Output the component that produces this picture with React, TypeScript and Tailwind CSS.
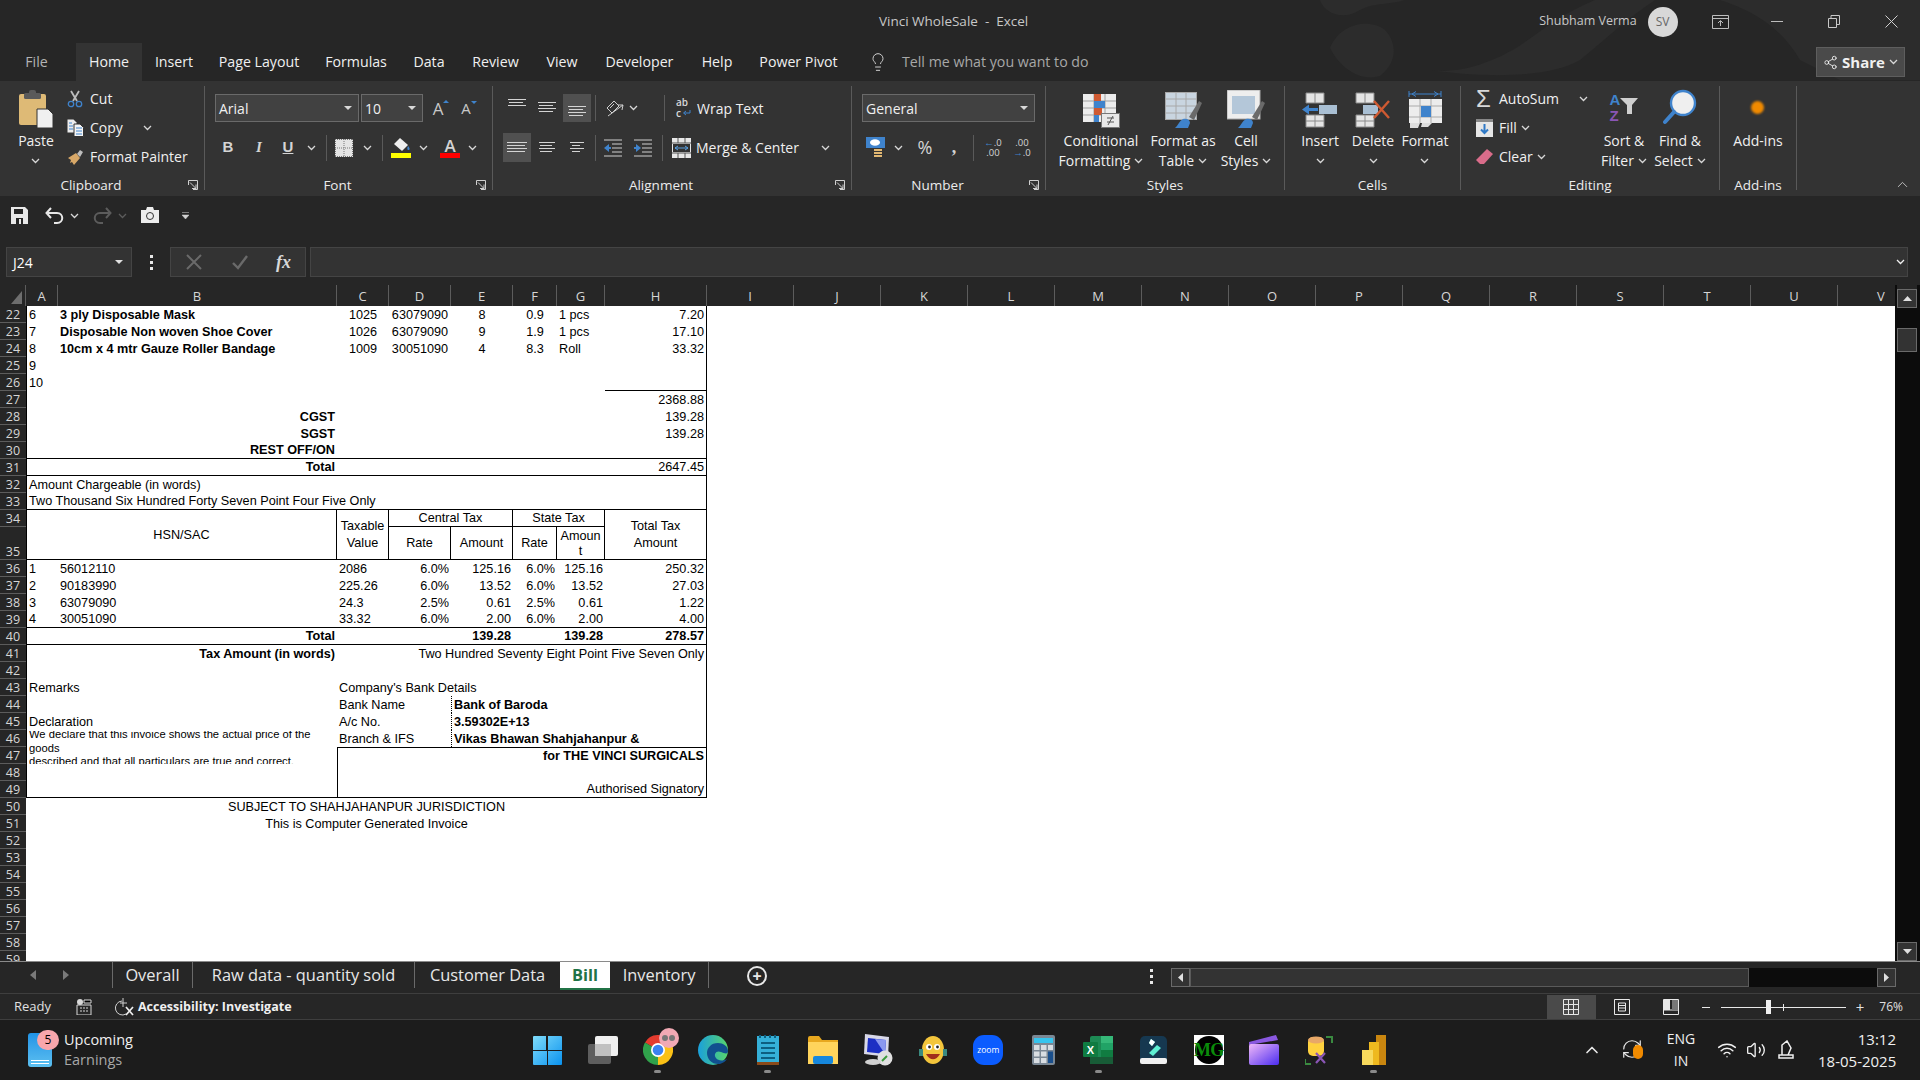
import type { ReactNode } from "react";
import clsx from "clsx";
import { ChevronUp, Volume2, Wifi, Lightbulb, Share2, RefreshCw } from "lucide-react";

const L = "border-l border-black";
const R = "border-r border-black";
const B = "border-b border-black";
const DOT = "border-l border-l-black [border-left-style:dotted]";

function Chev({ className, color = "#d8d8d8" }: { className?: string; color?: string }) {
  return (
    <svg width="9" height="6" viewBox="0 0 9 6" className={clsx("shrink-0", className)}>
      <path d="M1 1l3.5 3.5L8 1" fill="none" stroke={color} strokeWidth="1.3" />
    </svg>
  );
}

function Launcher() {
  return (
    <svg width="10" height="10" viewBox="0 0 10 10" className="shrink-0">
      <path d="M.5 5V.5H9.5V9.5H5M2 2.5l6 6M8 4.5v4H4" fill="none" stroke="#d0d0d0" />
    </svg>
  );
}

function Lines({ rows, active }: { rows: [number, number][]; active?: boolean }) {
  return (
    <div className={clsx("w-[28px] h-full flex items-center justify-center", active && "bg-[#505050]")}>
      <svg width="20" height="24" viewBox="0 0 20 24">
        {rows.map(([x, y], i) => (
          <rect key={i} x={x} y={y} width={i % 2 === 0 ? 20 - x * 2 : 20 - x * 2 - 2} height="1" fill="#d4d4d4" />
        ))}
      </svg>
    </div>
  );
}

function Group({ label, launcher, className, children }: { label: string; launcher?: boolean; className: string; children: ReactNode }) {
  return (
    <div className={clsx("h-[104px] flex flex-col border-r border-[#5a5a5a] shrink-0", className)}>
      <div className="h-[90px]">{children}</div>
      <div className="h-[14px] flex text-[13.5px] leading-[18px] text-[#ececec]">
        <span className="flex-1 text-center">{label}</span>
        {launcher && (
          <span className="w-[22px] flex justify-center pt-[4px]">
            <Launcher />
          </span>
        )}
      </div>
    </div>
  );
}

function BigBtn({ w, icon, lines }: { w: string; icon: ReactNode; lines: ReactNode[] }) {
  return (
    <div className={clsx("flex flex-col items-center shrink-0", w)}>
      <div className="h-[42px] flex items-end justify-center">{icon}</div>
      <div className="mt-[3px] text-[14px] leading-[20px] text-center whitespace-nowrap text-[#f0f0f0]">
        {lines.map((l, i) => (
          <div key={i} className="h-[20px] flex items-center justify-center gap-[4px]">
            {l}
          </div>
        ))}
      </div>
    </div>
  );
}

function SmallRow({ icon, children, className }: { icon: ReactNode; children: ReactNode; className?: string }) {
  return (
    <div className={clsx("h-[29px] flex items-center text-[14px] text-[#f0f0f0] whitespace-nowrap", className)}>
      {icon}
      {children}
    </div>
  );
}

function Combo({ value, w }: { value: string; w: string }) {
  return (
    <div className={clsx("h-[28px] flex items-center justify-between px-[3px] bg-[#414141] border border-[#6a6a6a] text-[14px] text-[#f0f0f0] shrink-0", w)}>
      <span>{value}</span>
      <svg width="8" height="4" viewBox="0 0 8 4" className="mr-[3px]">
        <path d="M0 0h8L4 4z" fill="#d8d8d8" />
      </svg>
    </div>
  );
}

function Sep({ className }: { className: string }) {
  return <div className={clsx("w-[1px] h-[26px] bg-[#5a5a5a] shrink-0", className)} />;
}

function Cb({ className, children, colSpan, rowSpan }: { className?: string; children?: ReactNode; colSpan?: number; rowSpan?: number }) {
  return (
    <td colSpan={colSpan} rowSpan={rowSpan} className={clsx("p-0 pt-[1px] px-[2px] bg-white text-black whitespace-nowrap align-middle", className)}>
      {children}
    </td>
  );
}

function Row({ n, h = "h-[17px]", children }: { n: number; h?: string; children?: ReactNode }) {
  return (
    <tr className={h}>
      <td className={clsx("p-0 bg-[#262626] border-b border-[#5c5c5c] text-center text-[#d6d6d6] font-['Open_Sans',sans-serif] text-[12.5px] leading-[15px] align-bottom", h)}>{n}</td>
      {children}
    </tr>
  );
}

const colHeads: [string, string][] = [
  ["A", "w-[32px]"], ["B", "w-[279px]"], ["C", "w-[52px]"], ["D", "w-[62px]"], ["E", "w-[62px]"], ["F", "w-[44px]"], ["G", "w-[48px]"], ["H", "w-[102px]"],
  ["I", "w-[87px]"], ["J", "w-[87px]"], ["K", "w-[87px]"], ["L", "w-[87px]"], ["M", "w-[87px]"], ["N", "w-[87px]"], ["O", "w-[87px]"], ["P", "w-[87px]"], ["Q", "w-[87px]"], ["R", "w-[87px]"], ["S", "w-[87px]"], ["T", "w-[87px]"], ["U", "w-[87px]"], ["V", "w-[87px]"],
];

const items = [
  [22, "6", "3 ply Disposable Mask", "1025", "63079090", "8", "0.9", "1 pcs", "7.20"],
  [23, "7", "Disposable Non woven Shoe Cover", "1026", "63079090", "9", "1.9", "1 pcs", "17.10"],
  [24, "8", "10cm x 4 mtr Gauze Roller Bandage", "1009", "30051090", "4", "8.3", "Roll", "33.32"],
];

const taxes = [
  [36, "1", "56012110", "2086", "6.0%", "125.16", "6.0%", "125.16", "250.32"],
  [37, "2", "90183990", "225.26", "6.0%", "13.52", "6.0%", "13.52", "27.03"],
  [38, "3", "63079090", "24.3", "2.5%", "0.61", "2.5%", "0.61", "1.22"],
  [39, "4", "30051090", "33.32", "6.0%", "2.00", "6.0%", "2.00", "4.00"],
];

function Sheet() {
  return (
    <div className="h-[676px] flex bg-[#262626]">
      <div className="w-[1895px] overflow-hidden shrink-0">
        <table className="table-fixed border-separate border-spacing-0 w-[1925px] bg-white font-['Liberation_Sans',Arial,sans-serif] text-[12.67px] leading-[15px]">
          <colgroup>
            <col className="w-[26px]" />
            {colHeads.map(([c, w]) => (
              <col key={c} className={w} />
            ))}
          </colgroup>
          <tbody>
            <tr className="h-[21px]">
              <td className="p-0 bg-[#262626] border-r border-[#5c5c5c]">
                <svg width="26" height="21" viewBox="0 0 26 21">
                  <path d="M22 6v13H11z" fill="#6e6e6e" />
                </svg>
              </td>
              {colHeads.map(([c]) => (
                <td key={c} className="p-0 bg-[#262626] border-r border-[#5c5c5c] text-center text-[#d6d6d6] font-['Open_Sans',sans-serif] text-[13px] leading-[20px]">
                  {c}
                </td>
              ))}
            </tr>
            {items.map((r) => (
              <Row key={r[0]} n={r[0] as number}>
                <Cb className={L}>{r[1]}</Cb>
                <Cb className="font-bold">{r[2]}</Cb>
                <Cb className="text-center">{r[3]}</Cb>
                <Cb className="text-center">{r[4]}</Cb>
                <Cb className="text-center">{r[5]}</Cb>
                <Cb className="text-center">{r[6]}</Cb>
                <Cb>{r[7]}</Cb>
                <Cb className={clsx(R, "text-right")}>{r[8]}</Cb>
              </Row>
            ))}
            <Row n={25}>
              <Cb className={L}>9</Cb>
              <Cb colSpan={6} />
              <Cb className={R} />
            </Row>
            <Row n={26}>
              <Cb className={L}>10</Cb>
              <Cb colSpan={6} />
              <Cb className={clsx(R, B)} />
            </Row>
            <Row n={27}>
              <Cb className={L} colSpan={7} />
              <Cb className={clsx(R, "text-right")}>2368.88</Cb>
            </Row>
            <Row n={28}>
              <Cb className={L} />
              <Cb className="font-bold text-right">CGST</Cb>
              <Cb colSpan={5} />
              <Cb className={clsx(R, "text-right")}>139.28</Cb>
            </Row>
            <Row n={29}>
              <Cb className={L} />
              <Cb className="font-bold text-right">SGST</Cb>
              <Cb colSpan={5} />
              <Cb className={clsx(R, "text-right")}>139.28</Cb>
            </Row>
            <Row n={30}>
              <Cb className={clsx(L, B)} />
              <Cb className={clsx(B, "font-bold text-right")}>REST OFF/ON</Cb>
              <Cb className={B} colSpan={5} />
              <Cb className={clsx(R, B)} />
            </Row>
            <Row n={31}>
              <Cb className={clsx(L, B)} />
              <Cb className={clsx(B, "font-bold text-right")}>Total</Cb>
              <Cb className={B} colSpan={5} />
              <Cb className={clsx(R, B, "text-right")}>2647.45</Cb>
            </Row>
            <Row n={32}>
              <Cb className={L} colSpan={7}>Amount Chargeable (in words)</Cb>
              <Cb className={R} />
            </Row>
            <Row n={33}>
              <Cb className={clsx(L, B)} colSpan={7}>Two Thousand Six Hundred Forty Seven Point Four Five Only</Cb>
              <Cb className={clsx(R, B)} />
            </Row>
            <Row n={34}>
              <Cb className={clsx(L, B, R, "text-center")} colSpan={2} rowSpan={2}>HSN/SAC</Cb>
              <Cb className={clsx(B, R, "text-center leading-[17px]")} rowSpan={2}>Taxable<br />Value</Cb>
              <Cb className={clsx(B, R, "text-center")} colSpan={2}>Central Tax</Cb>
              <Cb className={clsx(B, R, "text-center")} colSpan={2}>State Tax</Cb>
              <Cb className={clsx(B, R, "text-center leading-[17px]")} rowSpan={2}>Total Tax<br />Amount</Cb>
            </Row>
            <Row n={35} h="h-[33px]">
              <Cb className={clsx(B, R, "text-center")}>Rate</Cb>
              <Cb className={clsx(B, R, "text-center")}>Amount</Cb>
              <Cb className={clsx(B, R, "text-center")}>Rate</Cb>
              <Cb className={clsx(B, R, "text-center leading-[15px]")}>Amoun<br />t</Cb>
            </Row>
            {taxes.map((r) => {
              const last = r[0] === 39 && B;
              return (
                <Row key={r[0]} n={r[0] as number}>
                  <Cb className={clsx(L, last)}>{r[1]}</Cb>
                  <Cb className={clsx(last)}>{r[2]}</Cb>
                  <Cb className={clsx(last)}>{r[3]}</Cb>
                  <Cb className={clsx(last, "text-right")}>{r[4]}</Cb>
                  <Cb className={clsx(last, "text-right")}>{r[5]}</Cb>
                  <Cb className={clsx(last, "text-right")}>{r[6]}</Cb>
                  <Cb className={clsx(last, "text-right")}>{r[7]}</Cb>
                  <Cb className={clsx(R, last, "text-right")}>{r[8]}</Cb>
                </Row>
              );
            })}
            <Row n={40}>
              <Cb className={clsx(L, B)} />
              <Cb className={clsx(B, "font-bold text-right")}>Total</Cb>
              <Cb className={B} colSpan={2} />
              <Cb className={clsx(B, "font-bold text-right")}>139.28</Cb>
              <Cb className={B} />
              <Cb className={clsx(B, "font-bold text-right")}>139.28</Cb>
              <Cb className={clsx(R, B, "font-bold text-right")}>278.57</Cb>
            </Row>
            <Row n={41}>
              <Cb className={L} />
              <Cb className="font-bold text-right">Tax Amount (in words)</Cb>
              <Cb className={clsx(R, "text-right")} colSpan={6}>Two Hundred Seventy Eight Point Five Seven Only</Cb>
            </Row>
            <Row n={42}>
              <Cb className={clsx(L, R)} colSpan={8} />
            </Row>
            <Row n={43}>
              <Cb className={L} colSpan={2}>Remarks</Cb>
              <Cb className={R} colSpan={6}>Company's Bank Details</Cb>
            </Row>
            <Row n={44}>
              <Cb className={L} colSpan={2} />
              <Cb colSpan={2}>Bank Name</Cb>
              <Cb className={clsx(R, DOT, "font-bold")} colSpan={4}>Bank of Baroda</Cb>
            </Row>
            <Row n={45}>
              <Cb className={L} colSpan={2}>Declaration</Cb>
              <Cb colSpan={2}>A/c No.</Cb>
              <Cb className={clsx(R, DOT, "font-bold")} colSpan={4}>3.59302E+13</Cb>
            </Row>
            <Row n={46}>
              <Cb className={clsx(L, "align-top pt-0")} colSpan={2} rowSpan={2}>
                <div className="h-[33px] overflow-hidden text-[11.2px] leading-[13.5px]">
                  <div className="-mt-[3px]">
                    We declare that this invoice shows the actual price of the
                    <br />
                    goods
                    <br />
                    described and that all particulars are true and correct.
                  </div>
                </div>
              </Cb>
              <Cb colSpan={2}>Branch &amp; IFS</Cb>
              <Cb className={clsx(R, DOT, "font-bold")} colSpan={4}>Vikas Bhawan Shahjahanpur &amp;</Cb>
            </Row>
            <Row n={47}>
              <Cb className={clsx(L, R, "border-t border-t-black font-bold text-right")} colSpan={6}>for THE VINCI SURGICALS</Cb>
            </Row>
            <Row n={48}>
              <Cb className={L} colSpan={2} />
              <Cb className={clsx(L, R)} colSpan={6} />
            </Row>
            <Row n={49}>
              <Cb className={clsx(L, B)} colSpan={2} />
              <Cb className={clsx(L, R, B, "text-right")} colSpan={6}>Authorised Signatory</Cb>
            </Row>
            <Row n={50}>
              <Cb className="text-center" colSpan={8}>SUBJECT TO SHAHJAHANPUR JURISDICTION</Cb>
            </Row>
            <Row n={51}>
              <Cb className="text-center" colSpan={8}>This is Computer Generated Invoice</Cb>
            </Row>
            {[52, 53, 54, 55, 56, 57, 58, 59].map((n) => (
              <Row key={n} n={n} />
            ))}
          </tbody>
        </table>
      </div>
      <div className="flex-1 flex flex-col items-center bg-[#0c0c0c] pl-[2px] pr-[3px]">
        <div className="w-full h-[21px] bg-[#262626] -mx-[2px]" />
        <div className="w-full h-[19px] -mt-[17px] bg-[#333] border border-[#6a6a6a] flex items-center justify-center">
          <svg width="9" height="5" viewBox="0 0 9 5"><path d="M4.5 0L9 5H0z" fill="#e0e0e0" /></svg>
        </div>
        <div className="w-full h-[24px] mt-[20px] bg-[#333] border border-[#6a6a6a]" />
        <div className="flex-1" />
        <div className="w-full h-[19px] bg-[#333] border border-[#6a6a6a] flex items-center justify-center">
          <svg width="9" height="5" viewBox="0 0 9 5"><path d="M0 0h9L4.5 5z" fill="#e0e0e0" /></svg>
        </div>
      </div>
    </div>
  );
}

function TaskIcon({ children, dot }: { children: ReactNode; dot?: boolean }) {
  return (
    <div className="w-[55.1px] h-[60px] shrink-0 flex flex-col items-center pt-[14px]">
      <div className="h-[32px] flex items-center justify-center">{children}</div>
      <div className={clsx("mt-[4px] w-[7px] h-[3px] rounded-full", dot ? "bg-[#8a8a8a]" : "bg-transparent")} />
    </div>
  );
}

export default function App() {
  return (
    <div className="w-[1920px] h-[1080px] overflow-hidden bg-[#262626] font-['Open_Sans',sans-serif] text-white flex flex-col">
      {/* title bar */}
      <div className="relative h-[43px] shrink-0 flex items-center text-[13.5px] text-[#c8c8c8]">
        <svg className="absolute left-[1300px] top-0" width="620" height="80" viewBox="0 0 620 80">
          <path d="M20 0c5 15 25 20 40 10 15-8 30-5 45-10zM30 48c10-25 40-30 55-18 10 10 15 30-5 46-20 6-40-8-50-28zM130 70c30 5 70-10 95-28 20-14 40-30 70-42h60c-30 20-50 40-75 60-25 15-80 20-150 10zM420 0c30 10 60 25 80 60l40 20h80V0z" fill="#2c2c2c" />
        </svg>
        <span className="relative ml-[879px] whitespace-pre">Vinci WholeSale  -  Excel</span>
        <span className="relative ml-[511px] text-[12.5px]">Shubham Verma</span>
        <div className="relative ml-[11px] w-[30px] h-[30px] rounded-full bg-[#d8d8d8] text-[#666] text-[12px] flex items-center justify-center">SV</div>
        <svg className="relative ml-[34px]" width="17" height="14" viewBox="0 0 17 14">
          <path d="M.5.5h16v13H.5zM.5 3.5h16M8.5 11V6M6 8l2.5-2.5L11 8" fill="none" stroke="#bdbdbd" />
        </svg>
        <div className="relative ml-[42px] w-[12px] h-[1px] bg-[#bdbdbd]" />
        <svg className="relative ml-[45px]" width="12" height="13" viewBox="0 0 12 13">
          <path d="M.5 3.5h8v9h-8zM3 3V.5h8.5v9H9" fill="none" stroke="#c8c8c8" />
        </svg>
        <svg className="relative ml-[45px]" width="13" height="13" viewBox="0 0 13 13">
          <path d="M.5.5l12 12M12.5.5l-12 12" stroke="#d0d0d0" />
        </svg>
      </div>

      {/* tabs */}
      <div className="relative h-[38px] shrink-0 flex items-stretch pl-[12px] text-[14.2px] text-[#f0f0f0]">
        <div className="w-[49px] mr-[15px] flex items-center justify-center text-[#b4b4b4]">File</div>
        <div className="w-[66px] flex items-center justify-center bg-[#333]">Home</div>
        <div className="w-[64px] flex items-center justify-center">Insert</div>
        <div className="w-[106px] flex items-center justify-center">Page Layout</div>
        <div className="w-[88px] flex items-center justify-center">Formulas</div>
        <div className="w-[58px] flex items-center justify-center">Data</div>
        <div className="w-[75px] flex items-center justify-center">Review</div>
        <div className="w-[58px] flex items-center justify-center">View</div>
        <div className="w-[97px] flex items-center justify-center">Developer</div>
        <div className="w-[58px] flex items-center justify-center">Help</div>
        <div className="w-[105px] flex items-center justify-center">Power Pivot</div>
        <div className="ml-[17px] w-[20px] flex items-center justify-center">
          <Lightbulb size={20} strokeWidth={1.2} color="#cfcfcf" />
        </div>
        <div className="ml-[14px] flex items-center text-[#a8a8a8]">Tell me what you want to do</div>
        <div className="ml-auto mr-[15px] my-[4px] w-[89px] flex items-center justify-center gap-[4px] bg-[#4a4a4a] border border-[#5e5e5e] font-bold text-[15px]">
          <Share2 size={15} strokeWidth={1.4} />
          Share
          <Chev />
        </div>
      </div>

      {/* ribbon */}
      <div className="relative h-[115px] shrink-0 bg-[#333] pt-[5px] flex">
        <Group label="Clipboard" launcher className="w-[205px]">
          <div className="flex pl-[5px]">
            <BigBtn
              w="w-[62px]"
              icon={
                <svg width="36" height="38" viewBox="0 0 36 38">
                  <rect x="1" y="4" width="27" height="31" rx="2" fill="#deba76" />
                  <rect x="6" y="3" width="17" height="6" rx="1.5" fill="#5a5a5a" />
                  <rect x="11" y="0" width="7" height="5" rx="2" fill="#5a5a5a" />
                  <path d="M19 19h11l5 5v14H19z" fill="#f0f0f0" stroke="#333" />
                </svg>
              }
              lines={["Paste", <Chev key="c" />]}
            />
            <div className="-mt-[2px]">
              <SmallRow
                icon={
                  <svg width="16" height="18" viewBox="0 0 16 18" className="mr-[7px]">
                    <path d="M4 1l6 10M12 1L6 11" stroke="#bdbdbd" strokeWidth="1.8" />
                    <circle cx="4" cy="14" r="2.7" fill="none" stroke="#3f83cc" strokeWidth="1.3" />
                    <circle cx="12" cy="14" r="2.7" fill="none" stroke="#3f83cc" strokeWidth="1.3" />
                  </svg>
                }
              >
                Cut
              </SmallRow>
              <SmallRow
                icon={
                  <svg width="17" height="18" viewBox="0 0 17 18" className="mr-[6px]">
                    <path d="M.5.5h6l3 3v10h-9z" fill="#ededed" />
                    <path d="M7 5h6l3.5 3.5v9H7z" fill="#f5f5f5" stroke="#333" />
                    <path d="M2 4h3M2 7h4M2 10h4M9 9h6M9 12h6M9 15h6" stroke="#3f83cc" />
                  </svg>
                }
              >
                Copy
                <Chev className="ml-[20px]" />
              </SmallRow>
              <SmallRow
                icon={
                  <svg width="17" height="16" viewBox="0 0 17 16" className="mr-[6px]">
                    <path d="M10 5l3-4 3 2-3 5z" fill="#bdbdbd" />
                    <path d="M1 9l8-5 4 5-6 7-2-3-2 1 1-3z" fill="#d8a868" />
                  </svg>
                }
              >
                Format Painter
              </SmallRow>
            </div>
          </div>
        </Group>

        <Group label="Font" launcher className="w-[288px]">
          <div className="pl-[10px] pt-[8px]">
            <div className="flex items-center h-[28px]">
              <Combo value="Arial" w="w-[144px]" />
              <Combo value="10" w="w-[62px] ml-[2px]" />
              <div className="ml-[4px] w-[28px] flex items-start justify-center text-[17px] text-[#c8c8c8] leading-none">
                A<span className="w-0 h-0 border-x-[3px] border-b-[3px] border-x-transparent border-b-[#3f83cc]" />
              </div>
              <div className="w-[28px] flex items-start justify-center text-[15px] text-[#c8c8c8] leading-none">
                A<span className="w-0 h-0 border-x-[3px] border-t-[3px] border-x-transparent border-t-[#3f83cc]" />
              </div>
            </div>
            <div className="mt-[11px] h-[29px] flex items-center text-[#d4d4d4]">
              <div className="w-[26px] text-center font-bold text-[15px] font-['Liberation_Sans',sans-serif]">B</div>
              <div className="w-[36px] text-center italic font-bold text-[15px] font-['Liberation_Serif',serif]">I</div>
              <div className="w-[22px] text-center font-bold text-[15px] underline font-['Liberation_Sans',sans-serif]">U</div>
              <div className="w-[24px] flex justify-center"><Chev /></div>
              <Sep className="ml-[3px] mr-[3px]" />
              <div className="w-[28px] flex justify-center">
                <svg width="18" height="18" viewBox="0 0 18 18">
                  <rect width="18" height="18" fill="#e4e4e4" />
                  <path d="M9 0v18M0 9h18M0 .5h18M0 17.5h18M.5 0v18M17.5 0v18" stroke="#777" strokeDasharray="1 1" />
                </svg>
              </div>
              <div className="w-[18px] flex justify-center"><Chev /></div>
              <Sep className="ml-[6px] mr-[4px]" />
              <div className="w-[28px] flex flex-col items-center">
                <svg width="20" height="14" viewBox="0 0 20 14">
                  <path d="M9 0l8 7-6 6-8-7z" fill="#efefef" />
                  <path d="M17 8c2 2 2 4 .5 4S16 10 17 8z" fill="#3f83cc" />
                </svg>
                <div className="w-[20px] h-[5px] mt-[1px] bg-[#ffff00]" />
              </div>
              <div className="w-[16px] flex justify-center"><Chev /></div>
              <div className="ml-[4px] w-[30px] flex flex-col items-center leading-none">
                <span className="text-[17px] font-semibold leading-[15px]">A</span>
                <div className="w-[20px] h-[5px] bg-[#ff0000]" />
              </div>
              <div className="w-[14px] flex justify-center"><Chev /></div>
            </div>
          </div>
        </Group>

        <Group label="Alignment" launcher className="w-[359px]">
          <div className="pl-[10px] pt-[8px] text-[14px] text-[#f0f0f0]">
            <div className="h-[28px] flex items-center gap-[2px]">
              <Lines rows={[[1, 3], [2, 6], [1, 9]]} />
              <Lines rows={[[1, 6], [2, 9], [1, 12], [2, 15]]} />
              <Lines active rows={[[1, 10], [2, 13], [1, 16], [2, 19]]} />
              <Sep className="ml-[2px]" />
              <svg width="20" height="18" viewBox="0 0 20 18" className="ml-[7px]">
                <path d="M2 9l7-7 5 5-7 7zM5 9l4-4M3 17L18 6M18 6l-5 0M18 6l-1 5" fill="none" stroke="#cfcfcf" />
              </svg>
              <Chev className="ml-[2px]" />
              <Sep className="ml-[24px]" />
              <div className="ml-[9px] w-[18px] leading-[11px] text-[10px] font-semibold text-[#d8d8d8]">
                ab
                <div className="flex items-center">
                  c
                  <svg width="9" height="7" viewBox="0 0 9 7" className="ml-[1px]">
                    <path d="M8 0v3H2M4 1L1.500 3 4 5" fill="none" stroke="#3f83cc" />
                  </svg>
                </div>
              </div>
              <span className="ml-[1px]">Wrap Text</span>
            </div>
            <div className="mt-[11px] h-[29px] flex items-center gap-[2px]">
              <Lines active rows={[[0, 6], [0, 9], [0, 12], [0, 15]]} />
              <Lines rows={[[2, 6], [3, 9], [2, 12], [3, 15]]} />
              <Lines rows={[[3, 6], [5, 9], [3, 12], [5, 15]]} />
              <Sep className="ml-[2px]" />
              <svg width="18" height="18" viewBox="0 0 18 18" className="ml-[6px]">
                <path d="M0 1h18M8 5h10M8 9h10M8 13h10M0 17h18" stroke="#d0d0d0" />
                <path d="M0 9l5-4v3h2v2H5v3z" fill="#3f83cc" />
              </svg>
              <svg width="18" height="18" viewBox="0 0 18 18" className="ml-[10px]">
                <path d="M0 1h18M8 5h10M8 9h10M8 13h10M0 17h18" stroke="#d0d0d0" />
                <path d="M7 9L2 5v3H0v2h2v3z" fill="#3f83cc" />
              </svg>
              <Sep className="ml-[8px]" />
              <svg width="19" height="20" viewBox="0 0 19 20" className="ml-[7px]">
                <rect width="19" height="20" fill="#e8e8e8" />
                <path d="M0 5h19M0 15h19M6 0v5M13 0v5M6 15v5M13 15v5" stroke="#555" />
                <rect x="1" y="6" width="17" height="8" fill="#333" />
                <path d="M3 10h13M3 10l3-2M3 10l3 2M16 10l-3-2M16 10l-3 2" stroke="#5aa0e0" />
              </svg>
              <span className="ml-[3px] w-[106px] whitespace-nowrap">Merge &amp; Center</span>
              <Chev className="ml-[17px]" />
            </div>
          </div>
        </Group>

        <Group label="Number" launcher className="w-[194px]">
          <div className="pl-[10px] pt-[8px]">
            <Combo value="General" w="w-[173px]" />
            <div className="mt-[11px] h-[29px] pl-[4px] flex items-center text-[#d4d4d4]">
              <svg width="20" height="22" viewBox="0 0 20 22">
                <rect width="19" height="11" fill="#3f83cc" />
                <ellipse cx="9" cy="5.5" rx="5" ry="3.2" fill="#fff" />
                <path d="M8 12h8v2H8zM8 15h8v2H8zM8 18h8v2H8z" fill="#e2b873" />
              </svg>
              <div className="w-[24px] flex justify-center"><Chev /></div>
              <div className="w-[30px] text-center text-[18px]">%</div>
              <div className="w-[28px] text-center text-[18px] font-bold font-['Liberation_Serif',serif]">,</div>
              <Sep className="ml-[5px]" />
              <div className="w-[38px] flex flex-col items-center text-[9.5px] leading-[10px]">
                <span><span className="text-[#3f83cc]">←</span>.0</span>
                <span>.00</span>
              </div>
              <div className="w-[20px] flex flex-col items-center text-[9.5px] leading-[10px]">
                <span>.00</span>
                <span><span className="text-[#3f83cc]">→</span>.0</span>
              </div>
            </div>
          </div>
        </Group>

        <Group label="Styles" className="w-[239px]">
          <div className="flex pl-[12px]">
            <BigBtn
              w="w-[86px]"
              icon={
                <svg width="37" height="34" viewBox="0 0 37 34">
                  <rect width="33" height="28" fill="#ececec" />
                  <path d="M0 7h33M0 14h33M0 21h33M11 0v28M22 0v28" stroke="#a0a0a0" />
                  <rect x="11" y="0" width="7" height="7" fill="#cf5a32" />
                  <rect x="11" y="7" width="11" height="7" fill="#3f83cc" />
                  <rect x="11" y="14" width="8" height="7" fill="#cf5a32" />
                  <rect x="11" y="21" width="5" height="7" fill="#3f83cc" />
                  <rect x="18.5" y="19.5" width="18" height="14" fill="#e8e8e8" stroke="#777" />
                  <path d="M24 24h7M24 28h7M30 22l-5 9" stroke="#555" />
                </svg>
              }
              lines={["Conditional", <>Formatting <Chev /></>]}
            />
            <BigBtn
              w="w-[78px]"
              icon={
                <svg width="37" height="36" viewBox="0 0 37 36">
                  <rect width="32" height="28" fill="#c9d5e0" />
                  <path d="M0 .5h32M0 7h32M0 14h32M0 21h32M0 27.5h32M.5 0v28M11 0v28M21 0v28M31.5 0v28" stroke="#a8a8a8" />
                  <path d="M24 25l10-16 3 2-8 17z" fill="#6a6a6a" />
                  <path d="M10 36c3-2 4-7 8-9 4-1 7 1 7 4l-2 5z" fill="#3f83cc" />
                </svg>
              }
              lines={["Format as", <>Table <Chev /></>]}
            />
            <BigBtn
              w="w-[48px]"
              icon={
                <svg width="38" height="38" viewBox="0 0 38 38">
                  <rect width="33" height="29" fill="#eeeeee" stroke="#aaa" />
                  <rect x="5" y="6" width="23" height="18" fill="#b4c7d9" />
                  <path d="M25 27l10-16 3 2-8 17z" fill="#6a6a6a" />
                  <path d="M11 38c3-2 4-7 8-9 4-1 7 1 7 4l-2 5z" fill="#3f83cc" />
                </svg>
              }
              lines={["Cell", <>Styles <Chev /></>]}
            />
          </div>
        </Group>

        <Group label="Cells" className="w-[176px]">
          <div className="flex pl-[9px]">
            <BigBtn
              w="w-[52px]"
              icon={
                <svg width="36" height="36" viewBox="0 0 36 36">
                  <path d="M4 1h18v10H4zM4 23h18v12H4z" fill="#e4e4e4" stroke="#8a8a8a" />
                  <path d="M13 1v10M13 23v12M4 29h18" stroke="#8a8a8a" />
                  <rect x="17" y="13" width="18" height="9" fill="#a9bfd3" />
                  <path d="M0 17.5l7-5v3.5h9v3H7v3.500z" fill="#3f83cc" />
                </svg>
              }
              lines={["Insert", <Chev key="c" />]}
            />
            <BigBtn
              w="w-[54px]"
              icon={
                <svg width="36" height="36" viewBox="0 0 36 36">
                  <path d="M1 1h18v10H1zM1 23h18v12H1z" fill="#e4e4e4" stroke="#8a8a8a" />
                  <path d="M10 1v10M10 23v12M1 29h18" stroke="#8a8a8a" />
                  <rect x="8" y="13" width="15" height="9" fill="#a9bfd3" />
                  <path d="M19 9l15 17M34 9L19 26" stroke="#cf5a32" strokeWidth="2.4" />
                </svg>
              }
              lines={["Delete", <Chev key="c" />]}
            />
            <BigBtn
              w="w-[50px]"
              icon={
                <svg width="34" height="38" viewBox="0 0 34 38">
                  <path d="M1 4h32M1 1v6M33 1v6M4 4l4-2.500M4 4l4 2.500M30 4l-4-2.500M30 4l-4 2.500" stroke="#3f83cc" fill="none" />
                  <rect x="1" y="9" width="33" height="24" fill="#ececec" />
                  <path d="M1 16h33M1 27h33M12 9v24M23 9v24" stroke="#aaa" />
                  <rect x="13" y="16" width="10" height="11" fill="#3f83cc" />
                  <path d="M2 33h10l-2 5H2zM14 33h10l-4 4h-7z" fill="#ddd" />
                </svg>
              }
              lines={["Format", <Chev key="c" />]}
            />
          </div>
        </Group>

        <Group label="Editing" className="w-[259px]">
          <div className="flex">
            <div className="w-[135px] pl-[15px] -mt-[2px]">
              <SmallRow icon={<span className="w-[23px] text-[24px] leading-none text-[#d8d8d8] font-['Liberation_Sans',sans-serif]">Σ</span>}>
                <span className="w-[60px]">AutoSum</span>
                <Chev className="ml-[20px]" />
              </SmallRow>
              <SmallRow
                icon={
                  <svg width="17" height="18" viewBox="0 0 17 18" className="mr-[6px]">
                    <rect width="17" height="18" fill="#e6e6e6" />
                    <rect width="17" height="3" fill="#888" />
                    <path d="M8.500 5v9M5 10.500l3.500 3.500 3.500-3.500" fill="none" stroke="#2f79c6" strokeWidth="2" />
                  </svg>
                }
              >
                Fill
                <Chev className="ml-[4px]" />
              </SmallRow>
              <SmallRow
                icon={
                  <svg width="17" height="16" viewBox="0 0 17 16" className="mr-[6px]">
                    <path d="M11 0l6 5-9 10H4l-4-4z" fill="#d96c8a" />
                  </svg>
                }
              >
                Clear
                <Chev className="ml-[4px]" />
              </SmallRow>
            </div>
            <BigBtn
              w="w-[56px]"
              icon={
                <div className="flex items-center h-[34px] mb-[3px]">
                  <div className="text-[15px] leading-[16px] font-semibold font-['Liberation_Sans',sans-serif]">
                    <div className="text-[#3f83cc]">A</div>
                    <div className="text-[#8a56b5]">Z</div>
                  </div>
                  <svg width="18" height="18" viewBox="0 0 18 18" className="mb-[4px]">
                    <path d="M0 1h18l-6 7v9H7V8z" fill="#cfcfcf" />
                  </svg>
                </div>
              }
              lines={["Sort &", <>Filter <Chev /></>]}
            />
            <BigBtn
              w="w-[56px]"
              icon={
                <svg width="34" height="36" viewBox="0 0 34 36" className="mb-[3px]">
                  <circle cx="20" cy="14" r="12" fill="#efefef" stroke="#3f83cc" strokeWidth="2.4" />
                  <path d="M11 23L2 33" stroke="#3f83cc" strokeWidth="4" strokeLinecap="round" />
                </svg>
              }
              lines={["Find &", <>Select <Chev /></>]}
            />
          </div>
        </Group>

        <Group label="Add-ins" className="w-[77px]">
          <BigBtn
            w="w-full"
            icon={<div className="mb-[14px] mr-[2px] w-[13px] h-[13px] rounded-full bg-[#f08a00] blur-[1px]" />}
            lines={["Add-ins"]}
          />
        </Group>

        <ChevronUp className="absolute right-[9px] bottom-[3px]" size={17} strokeWidth={1.2} color="#d0d0d0" />
      </div>

      {/* quick access */}
      <div className="h-[51px] shrink-0 flex items-start pt-[11px] pl-[11px]">
        <svg width="17" height="17" viewBox="0 0 17 17">
          <path d="M0 0h14l3 3v14H0z" fill="#e8e8e8" />
          <path d="M3 2h9v5H3z" fill="#262626" />
          <path d="M5 11h7v6H5z" fill="#262626" />
          <path d="M8 12h2v5H8z" fill="#e8e8e8" />
        </svg>
        <svg width="20" height="18" viewBox="0 0 20 18" className="ml-[17px]">
          <path d="M3 6h9c7 0 7 10 0 10H9M6 1L1.500 6 6 11" fill="none" stroke="#e8e8e8" strokeWidth="2" />
        </svg>
        <Chev className="ml-[5px] mt-[6px]" />
        <svg width="20" height="18" viewBox="0 0 20 18" className="ml-[13px]">
          <path d="M17 6H8c-7 0-7 10 0 10h3M14 1l4.500 5L14 11" fill="none" stroke="#5c5c5c" strokeWidth="2" />
        </svg>
        <Chev className="ml-[6px] mt-[6px]" color="#5c5c5c" />
        <svg width="18" height="16" viewBox="0 0 18 16" className="ml-[14px]">
          <path d="M0 3h5l1-3h6l1 3h5v13H0z" fill="#ececec" />
          <circle cx="9" cy="9" r="3.500" fill="none" stroke="#333" />
        </svg>
        <svg width="7" height="8" viewBox="0 0 7 8" className="ml-[23px] mt-[5px]">
          <path d="M0 .5h7M0 3h7L3.500 7z" fill="#d0d0d0" stroke="#d0d0d0" strokeWidth=".5" />
        </svg>
      </div>

      {/* formula bar */}
      <div className="h-[30px] shrink-0 flex items-stretch">
        <div className="ml-[6px] w-[126px] bg-[#333] border border-[#444] flex items-center justify-between pl-[6px] pr-[8px] text-[14px]">
          J24
          <svg width="8" height="4" viewBox="0 0 8 4"><path d="M0 0h8L4 4z" fill="#e0e0e0" /></svg>
        </div>
        <div className="w-[38px] flex flex-col items-center justify-center gap-[3px]">
          <div className="w-[3px] h-[3px] bg-[#e8e8e8]" />
          <div className="w-[3px] h-[3px] bg-[#e8e8e8]" />
          <div className="w-[3px] h-[3px] bg-[#e8e8e8]" />
        </div>
        <div className="w-[136px] bg-[#333] border border-[#444] flex items-center pl-[15px]">
          <svg width="16" height="16" viewBox="0 0 16 16"><path d="M1 1l14 14M15 1L1 15" stroke="#6a6a6a" strokeWidth="2" /></svg>
          <svg width="18" height="16" viewBox="0 0 18 16" className="ml-[29px]"><path d="M2 9l5 5L16 2" fill="none" stroke="#6a6a6a" strokeWidth="2.400" /></svg>
          <span className="ml-[27px] text-[18px] italic font-bold text-[#d8d8d8] font-['Liberation_Serif',serif]">fx</span>
        </div>
        <div className="ml-[4px] w-[1598px] bg-[#333] border border-[#444] flex items-center justify-end pr-[2px]">
          <Chev color="#f0f0f0" />
        </div>
      </div>
      <div className="h-[8px] shrink-0" />

      <Sheet />

      {/* sheet tabs */}
      <div className="h-[32px] shrink-0 border-t border-[#8a8a8a] flex items-start text-[16.4px] text-[#e8e8e8]">
        <div className="w-[112px] h-[26px] flex items-center pl-[30px] gap-[27px]">
          <svg width="6" height="10" viewBox="0 0 6 10"><path d="M6 0v10L0 5z" fill="#7a7a7a" /></svg>
          <svg width="6" height="10" viewBox="0 0 6 10"><path d="M0 0v10l6-5z" fill="#7a7a7a" /></svg>
        </div>
        <div className="h-[26px] w-[81px] border-x border-[#6a6a6a] flex items-center justify-center">Overall</div>
        <div className="h-[26px] w-[222px] border-r border-[#6a6a6a] flex items-center justify-center">Raw data - quantity sold</div>
        <div className="h-[26px] w-[145px] flex items-center justify-center">Customer Data</div>
        <div className="h-[28px] w-[50px] bg-white border-b-2 border-[#217346] flex items-center justify-center font-bold text-[#217346]">Bill</div>
        <div className="h-[26px] w-[99px] border-r border-[#6a6a6a] flex items-center justify-center">Inventory</div>
        <div className="ml-[38px] mt-[4px] w-[20px] h-[20px] rounded-full border-2 border-[#e8e8e8] flex items-center justify-center text-[16px] leading-none font-bold">+</div>
        <div className="ml-[374px] mt-[7px] w-[20px] flex flex-col items-center gap-[3px]">
          <div className="w-[3px] h-[3px] bg-[#e8e8e8]" />
          <div className="w-[3px] h-[3px] bg-[#e8e8e8]" />
          <div className="w-[3px] h-[3px] bg-[#e8e8e8]" />
        </div>
        <div className="ml-[10px] mt-[6px] h-[19px] w-[725px] flex bg-[#0c0c0c]">
          <div className="w-[19px] bg-[#333] border border-[#6a6a6a] flex items-center justify-center">
            <svg width="5" height="9" viewBox="0 0 5 9"><path d="M5 0v9L0 4.500z" fill="#e0e0e0" /></svg>
          </div>
          <div className="w-[559px] bg-[#333] border border-[#5a5a5a]" />
          <div className="ml-auto w-[19px] bg-[#333] border border-[#6a6a6a] flex items-center justify-center">
            <svg width="5" height="9" viewBox="0 0 5 9"><path d="M0 0v9l5-4.500z" fill="#e0e0e0" /></svg>
          </div>
        </div>
      </div>

      {/* status bar */}
      <div className="h-[27px] shrink-0 border-y border-[#3e3e3e] flex items-center pt-[1px] text-[13px] text-[#e0e0e0]">
        <span className="ml-[14px] w-[62px]">Ready</span>
        <svg width="16" height="16" viewBox="0 0 16 16">
          <circle cx="4" cy="3" r="3" fill="#d8d8d8" />
          <path d="M1 6h14v10H1z" fill="none" stroke="#d8d8d8" />
          <path d="M8 1h7v3H8zM4 9h2M7 9h2M10 9h2M4 12h2M7 12h2M10 12h2" stroke="#d8d8d8" />
        </svg>
        <svg width="20" height="18" viewBox="0 0 20 18" className="ml-[23px]">
          <path d="M7 3a7 7 0 1 0 4 13M8 0v9M5 5h7" fill="none" stroke="#cfcfcf" />
          <path d="M11 9l7 8M18 9l-7 8" stroke="#f0f0f0" strokeWidth="1.700" />
        </svg>
        <span className="ml-[3px] font-bold text-[12.5px] text-[#f0f0f0]">Accessibility: Investigate</span>
        <div className="ml-auto flex items-center h-full pr-[17px]">
          <div className="w-[49px] h-full bg-[#4a4a4a] flex items-center justify-center">
            <svg width="16" height="16" viewBox="0 0 16 16"><path d="M.5.5h15v15H.5zM.5 5.500h15M.5 10.500h15M5.500.5v15M10.500.5v15" fill="none" stroke="#e8e8e8" /></svg>
          </div>
          <svg width="16" height="16" viewBox="0 0 16 16" className="ml-[18px]"><path d="M.5.5h15v15H.5zM4.500 4h7v8h-7zM4.500 6.500h7M4.500 9h7" fill="none" stroke="#e8e8e8" /></svg>
          <svg width="16" height="16" viewBox="0 0 16 16" className="ml-[33px]"><path d="M.5.5h15v15H.5zM.5 11h15" fill="none" stroke="#e8e8e8" /><rect x="1" y="1" width="6" height="10" fill="#e8e8e8" /><rect x="9" y="1" width="6" height="10" fill="#777" /></svg>
          <div className="ml-[23px] w-[8px] h-[1px] bg-[#e8e8e8]" />
          <div className="relative ml-[11px] w-[125px] h-[1px] bg-[#e8e8e8] flex items-center">
            <div className="ml-[45px] w-[5px] h-[14px] bg-[#f0f0f0]" />
            <div className="ml-[12px] w-[1px] h-[7px] bg-[#e8e8e8]" />
          </div>
          <div className="ml-[10px] text-[15px] leading-none">+</div>
          <span className="ml-[15px] text-[12px]">76%</span>
        </div>
      </div>

      {/* taskbar */}
      <div className="flex-1 bg-[#1c1c1c] flex items-stretch">
        <div className="w-[520px] shrink-0 flex items-center pl-[28px]">
          <div className="relative w-[24px] h-[34px] rounded-[3px] bg-gradient-to-b from-[#1f93e6] to-[#5cc0f0] flex flex-col justify-end gap-[2px] p-[3px]">
            <div className="h-[1px] bg-white" />
            <div className="h-[1px] bg-white" />
            <div className="absolute -top-[3px] left-[9px] w-[22px] h-[20px] rounded-full bg-[#f8a6ac] text-black text-[12px] flex items-center justify-center">5</div>
          </div>
          <div className="ml-[12px] text-[14.5px] leading-[20px]">
            <div className="text-[#f0f0f0]">Upcoming</div>
            <div className="text-[#a8a8a8]">Earnings</div>
          </div>
        </div>
        <div className="flex">
          <TaskIcon>
            <svg width="29" height="29" viewBox="0 0 29 29">
              <defs>
                <linearGradient id="w1" x1="0" y1="0" x2="1" y2="1"><stop offset="0" stopColor="#7fdcfb" /><stop offset="1" stopColor="#0a92ee" /></linearGradient>
              </defs>
              <path d="M0 1a1 1 0 0 1 1-1h12v14H0zM15 0h13a1 1 0 0 1 1 1v13H15zM0 15h14v14H1a1 1 0 0 1-1-1zM15 15h14v13a1 1 0 0 1-1 1H15z" fill="url(#w1)" />
            </svg>
          </TaskIcon>
          <TaskIcon>
            <svg width="30" height="28" viewBox="0 0 30 28">
              <rect x="7" y="0" width="23" height="20" rx="2" fill="#f0f0f0" />
              <rect x="0" y="8" width="23" height="20" rx="2" fill="#5e5e5e" />
              <rect x="7" y="8" width="16" height="12" fill="#c0c0c0" />
            </svg>
          </TaskIcon>
          <TaskIcon dot>
            <div className="relative w-[30px] h-[30px]">
              <svg width="30" height="30" viewBox="0 0 30 30">
                <path d="M15 15L2 7.500A15 15 0 0 1 28 7.500z" fill="#e33b2e" />
                <path d="M15 15L2 7.500A15 15 0 0 0 15 30z" fill="#30a24b" />
                <path d="M15 15l13-7.500A15 15 0 0 1 15 30z" fill="#fbc116" />
                <circle cx="15" cy="15" r="7" fill="#fff" />
                <circle cx="15" cy="15" r="5.300" fill="#3b82f0" />
              </svg>
              <div className="absolute -top-[7px] left-[16px] w-[20px] h-[20px] rounded-full bg-[#f1a9b4] flex items-center justify-center gap-[1px]">
                <span className="w-[6px] h-[6px] rounded-full bg-[#777]" />
                <span className="w-[6px] h-[6px] rounded-full bg-[#777]" />
              </div>
            </div>
          </TaskIcon>
          <TaskIcon>
            <svg width="30" height="30" viewBox="0 0 30 30">
              <defs>
                <linearGradient id="e1" x1="0" y1="0" x2="1" y2="0"><stop offset="0" stopColor="#1aa0dc" /><stop offset="1" stopColor="#58d46c" /></linearGradient>
              </defs>
              <circle cx="15" cy="15" r="15" fill="url(#e1)" />
              <path d="M30 16c0-5-5-8-10-8-7 0-11 5-11 10 0 6 5 12 13 11 3-1 6-3 7-5-8 4-13-1-12-5 1-3 4-3 6-2 3 1 7 3 7-1z" fill="#11508f" />
            </svg>
          </TaskIcon>
          <TaskIcon dot>
            <svg width="22" height="30" viewBox="0 0 22 30">
              <rect y="1" width="22" height="29" fill="#35b0d8" />
              <rect y="27" width="22" height="3" fill="#8a4a1a" />
              <path d="M4 8h14M4 13h14M4 18h14M4 23h14" stroke="#0d5f80" strokeWidth="2" />
              <path d="M3 0v3M8 0v3M13 0v3M18 0v3" stroke="#0d5f80" strokeWidth="2" />
            </svg>
          </TaskIcon>
          <TaskIcon>
            <svg width="30" height="28" viewBox="0 0 30 28">
              <path d="M0 2a2 2 0 0 1 2-2h9l3 4h16v24H0z" fill="#e8a81f" />
              <rect y="6" width="30" height="22" fill="#ffd45c" />
              <rect x="5" y="20" width="20" height="8" rx="2" fill="#1687dd" />
            </svg>
          </TaskIcon>
          <TaskIcon>
            <svg width="30" height="32" viewBox="0 0 30 32">
              <path d="M2 0l24 3-1 20L1 20z" fill="#d8d8e8" />
              <path d="M5 4l18 2-1 14L4 18z" fill="#1c2fc4" />
              <path d="M12 5l11 1-1 14z" fill="#8a98f0" />
              <circle cx="22" cy="24" r="7.500" fill="#e0e0e0" />
              <ellipse cx="10" cy="28" rx="8" ry="3" fill="#d0d0d0" />
              <path d="M19 27l5-5" stroke="#3a9a3a" strokeWidth="2" />
            </svg>
          </TaskIcon>
          <TaskIcon>
            <svg width="30" height="30" viewBox="0 0 30 30">
              <ellipse cx="15" cy="15" rx="11" ry="14" fill="#f3c53c" />
              <circle cx="11" cy="12" r="3" fill="#fff" />
              <circle cx="19" cy="12" r="3" fill="#fff" />
              <circle cx="11.500" cy="12" r="1.400" fill="#222" />
              <circle cx="19.500" cy="12" r="1.400" fill="#222" />
              <path d="M8 19c4 7 10 7 14 0z" fill="#a02c1c" />
              <path d="M1 14h4v7H1zM25 14h4v7h-4z" fill="#3a8a80" />
            </svg>
          </TaskIcon>
          <TaskIcon>
            <div className="w-[30px] h-[30px] rounded-[11px] bg-[#0b5cff] flex items-center justify-center text-[8.5px] text-white leading-none">zoom</div>
          </TaskIcon>
          <TaskIcon>
            <svg width="23" height="30" viewBox="0 0 23 30">
              <rect width="23" height="30" rx="2" fill="#7a8794" />
              <rect x="2" y="3" width="19" height="5" fill="#35c4ee" />
              <path d="M2 10h5.500v5H2zM9 10h5.500v5H9zM16 10h5v5h-5zM2 16.500h5.500v5H2zM9 16.500h5.500v5H9zM2 23h5.500v5H2zM9 23h5.500v5H9z" fill="#d8dde2" />
              <rect x="16" y="16.500" width="5" height="11.500" fill="#1a4f8c" />
            </svg>
          </TaskIcon>
          <TaskIcon dot>
            <svg width="30" height="28" viewBox="0 0 30 28">
              <rect x="7" width="23" height="28" rx="2" fill="#1d8a54" />
              <rect x="18" width="12" height="7" fill="#35b878" />
              <rect x="18" y="7" width="12" height="7" fill="#21a366" />
              <rect x="18" y="14" width="12" height="7" fill="#107c41" />
              <rect x="7" y="21" width="23" height="7" fill="#185c37" />
              <rect y="6" width="15" height="15" rx="1" fill="#0f7b41" />
              <text x="7.500" y="17.500" textAnchor="middle" fontSize="11" fontWeight="700" fill="#fff" fontFamily="Liberation Sans">X</text>
            </svg>
          </TaskIcon>
          <TaskIcon>
            <svg width="27" height="28" viewBox="0 0 27 28">
              <rect width="27" height="28" rx="5" fill="#163850" />
              <rect y="22" width="27" height="6" rx="2" fill="#f0f0f0" />
              <path d="M11 3l4 3-3 4-3-3zM17 9l4 3-8 8-4-3z" fill="#5ff0d2" />
              <path d="M11 3l4 3-3 4-3-3z" fill="#fff" />
            </svg>
          </TaskIcon>
          <TaskIcon>
            <div className="relative w-[30px] h-[30px] bg-white flex items-center justify-center overflow-hidden">
              <div className="w-[28px] h-[28px] rounded-full bg-black" />
              <span className="absolute inset-0 flex items-center justify-center font-['Liberation_Serif',serif] font-bold text-[18px] text-[#0a8a0a] tracking-tighter">MG</span>
            </div>
          </TaskIcon>
          <TaskIcon>
            <svg width="30" height="30" viewBox="0 0 30 30">
              <defs>
                <linearGradient id="c1" x1="0" y1="0" x2="1" y2="1"><stop offset="0" stopColor="#f0b8f8" /><stop offset="1" stopColor="#4a2cf0" /></linearGradient>
              </defs>
              <path d="M0 7l27-7 2 5L0 10z" fill="#8a58e0" />
              <rect y="9" width="30" height="21" rx="2" fill="url(#c1)" />
            </svg>
          </TaskIcon>
          <TaskIcon>
            <svg width="28" height="29" viewBox="0 0 28 29">
              <rect x="3" y="1" width="16" height="19" rx="5" fill="#ffd23f" />
              <ellipse cx="11" cy="4" rx="8" ry="3.500" fill="#e8a868" />
              <path d="M21 1h6v6M0 23v5h6" fill="none" stroke="#3a8a40" strokeWidth="2" />
              <path d="M11 17l9 10M20 17l-9 10" stroke="#8a56b5" strokeWidth="2.200" />
            </svg>
          </TaskIcon>
          <TaskIcon dot>
            <svg width="24" height="30" viewBox="0 0 24 30">
              <rect x="14" width="10" height="30" fill="#c9860f" />
              <rect x="7" y="7" width="10" height="23" fill="#eeb91f" />
              <rect y="15" width="11" height="15" fill="#f7d95c" />
            </svg>
          </TaskIcon>
        </div>
        <div className="ml-auto flex items-center pr-[24px]">
          <ChevronUp size={20} strokeWidth={2} color="#e8e8e8" />
          <div className="relative ml-[19px] w-[22px] h-[24px]">
            <RefreshCw size={22} strokeWidth={1.3} color="#e8e8e8" />
            <span className="absolute right-0 top-[7px] w-[10px] h-[14px] rounded-full bg-[#f08a00]" />
          </div>
          <div className="ml-[23px] w-[30px] text-center text-[14px] leading-[22px] text-[#f0f0f0]">
            ENG
            <br />
            IN
          </div>
          <Wifi className="ml-[21px]" size={20} strokeWidth={1.8} color="#f0f0f0" />
          <Volume2 className="ml-[9px]" size={20} strokeWidth={1.6} color="#f0f0f0" />
          <svg width="20" height="20" viewBox="0 0 20 20" className="ml-[10px]">
            <path d="M3 15h14v3H3zM6 15V5l5-4 4 7-3 7z" fill="none" stroke="#f0f0f0" strokeWidth="1.500" />
          </svg>
          <div className="ml-[22px] w-[78px] text-right text-[15px] leading-[22px] text-[#f0f0f0] whitespace-nowrap">
            13:12
            <br />
            18-05-2025
          </div>
        </div>
      </div>
    </div>
  );
}
